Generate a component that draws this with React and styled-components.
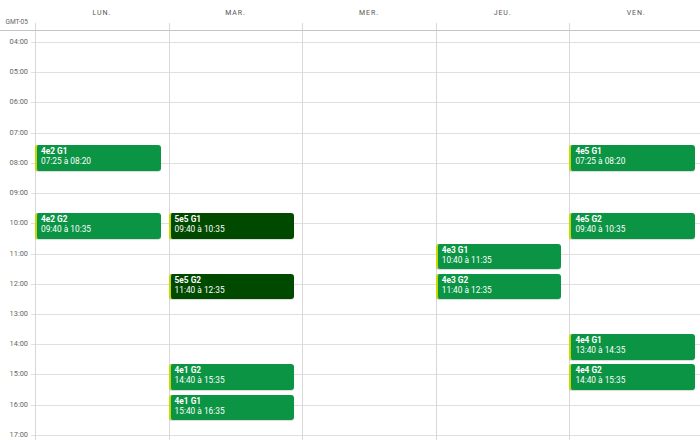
import React from "react";
import styled, { createGlobalStyle } from "styled-components";

const HOUR = 30.23;
const FIRST_HOUR = 4;
const TOP_GAP = 11;

const GlobalStyle = createGlobalStyle`
  html, body {
    margin: 0;
    padding: 0;
    background: #fff;
    overflow: hidden;
  }
  body {
    font-family: Roboto, "Liberation Sans", Arial, sans-serif;
  }
`;

const Viewport = styled.div`
  width: 700px;
  height: 440px;
  overflow: hidden;
`;

const Calendar = styled.div`
  width: 703px;
  height: 440px;
  display: flex;
  flex-direction: column;
  background: #fff;
`;

const Header = styled.div`
  display: flex;
  height: 30px;
  border-bottom: 1px solid #c4c4c4;
  flex-shrink: 0;
`;

const ZoneCell = styled.div`
  width: 35px;
  display: flex;
  align-items: flex-end;
  justify-content: flex-end;
  padding: 0 7px 4px 0;
  box-sizing: border-box;
  font-size: 6.6px;
  color: #666;
  line-height: 8px;
`;

const DayHead = styled.div`
  flex: 1;
  display: flex;
  flex-direction: column;
  justify-content: space-between;
`;

const DayName = styled.div`
  text-align: center;
  font-size: 7px;
  letter-spacing: 0.9px;
  color: #555;
  padding-top: 8px;
  line-height: 10px;
`;

const Stub = styled.div`
  height: 7px;
  border-left: 1px solid #d8d8d8;
`;

const Body = styled.div`
  display: flex;
  flex: 1;
`;

const Gutter = styled.div`
  width: 35px;
  display: flex;
  flex-direction: column;
  padding-top: ${TOP_GAP}px;
`;

const GutterSlot = styled.div`
  height: ${HOUR}px;
  display: flex;
  justify-content: flex-end;
  align-items: flex-start;
  flex-shrink: 0;
`;

const HourLabel = styled.span`
  font-size: 7.4px;
  line-height: 10px;
  margin-top: -5px;
  margin-right: 3px;
  color: #666;
`;

const Tick = styled.div`
  width: 4px;
  border-top: 1px solid #e0e0e0;
`;

const DayColumn = styled.div`
  flex: 1;
  position: relative;
  display: flex;
  flex-direction: column;
  padding-top: ${TOP_GAP}px;
  border-left: 1px solid #d8d8d8;
`;

const Slot = styled.div`
  height: ${HOUR}px;
  border-top: 1px solid #e0e0e0;
  box-sizing: border-box;
  flex-shrink: 0;
`;

const Event = styled.div`
  position: absolute;
  left: -1px;
  right: 8px;
  box-sizing: border-box;
  background: ${(p) => (p.$dark ? "#004a00" : "#0b9444")};
  border-left: 2px solid #c9d800;
  border-radius: 3px;
  padding: 1px 4px;
  color: #fff;
  font-size: 8.3px;
  line-height: 10px;
  box-shadow: 0 1px 1px rgba(0, 0, 0, 0.15);
  overflow: hidden;
`;

const EventTitle = styled.div`
  font-weight: 700;
`;

const EventTime = styled.div`
  font-weight: 400;
`;

const hours = Array.from({ length: 14 }, (_, i) => FIRST_HOUR + i);
const pad = (n) => String(n).padStart(2, "0");

const days = [
  {
    name: "LUN.",
    events: [
      { title: "4e2 G1", start: "07:25", end: "08:20" },
      { title: "4e2 G2", start: "09:40", end: "10:35" },
    ],
  },
  {
    name: "MAR.",
    events: [
      { title: "5e5 G1", start: "09:40", end: "10:35", dark: true },
      { title: "5e5 G2", start: "11:40", end: "12:35", dark: true },
      { title: "4e1 G2", start: "14:40", end: "15:35" },
      { title: "4e1 G1", start: "15:40", end: "16:35" },
    ],
  },
  { name: "MER.", events: [] },
  {
    name: "JEU.",
    events: [
      { title: "4e3 G1", start: "10:40", end: "11:35" },
      { title: "4e3 G2", start: "11:40", end: "12:35" },
    ],
  },
  {
    name: "VEN.",
    events: [
      { title: "4e5 G1", start: "07:25", end: "08:20" },
      { title: "4e5 G2", start: "09:40", end: "10:35" },
      { title: "4e4 G1", start: "13:40", end: "14:35" },
      { title: "4e4 G2", start: "14:40", end: "15:35" },
    ],
  },
];

const toY = (t) => {
  const [h, m] = t.split(":").map(Number);
  return TOP_GAP + (h - FIRST_HOUR + m / 60) * HOUR;
};

export default function App() {
  return (
    <>
      <GlobalStyle />
      <Viewport>
        <Calendar>
          <Header>
            <ZoneCell>GMT-05</ZoneCell>
            {days.map((d) => (
              <DayHead key={d.name}>
                <DayName>{d.name}</DayName>
                <Stub />
              </DayHead>
            ))}
          </Header>
          <Body>
            <Gutter>
              {hours.map((h) => (
                <GutterSlot key={h}>
                  <HourLabel>{pad(h)}:00</HourLabel>
                  <Tick />
                </GutterSlot>
              ))}
            </Gutter>
            {days.map((d) => (
              <DayColumn key={d.name}>
                {hours.map((h) => (
                  <Slot key={h} />
                ))}
                {d.events.map((ev) => {
                  const top = toY(ev.start);
                  const height = toY(ev.end) - top - 2;
                  return (
                    <Event key={ev.title} $dark={ev.dark} style={{ top, height }}>
                      <EventTitle>{ev.title}</EventTitle>
                      <EventTime>
                        {ev.start} à {ev.end}
                      </EventTime>
                    </Event>
                  );
                })}
              </DayColumn>
            ))}
          </Body>
        </Calendar>
      </Viewport>
    </>
  );
}
